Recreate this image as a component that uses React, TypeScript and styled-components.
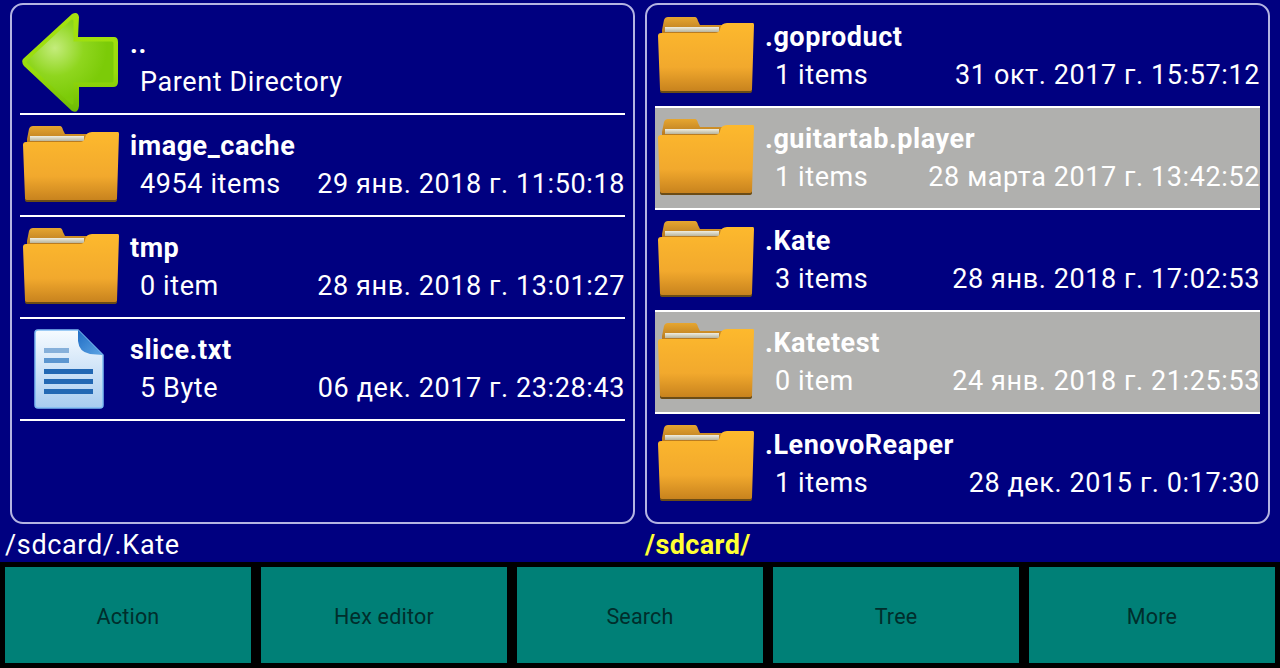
import React from 'react'
import styled, { createGlobalStyle } from 'styled-components'

const GlobalStyle = createGlobalStyle`
  html, body {
    margin: 0;
    padding: 0;
    background: #000080;
  }
  body {
    font-family: Roboto, "Liberation Sans", sans-serif;
  }
`;

const Screen = styled.div`
  width: 1280px;
  height: 668px;
  display: flex;
  flex-direction: column;
  overflow: hidden;
  background: #000080;
`;

const Panes = styled.div`
  display: grid;
  grid-template-columns: 625px 625px;
  column-gap: 10px;
  padding: 3px 10px 0;
  height: 521px;
`;

const Pane = styled.div<{ $top: number }>`
  box-sizing: border-box;
  height: 521px;
  border: 2px solid #b4b4e2;
  border-radius: 13px;
  padding: ${(p) => p.$top}px 8px 0;
  overflow: hidden;
`;

const Row = styled.div<{ $selected?: boolean; $last?: boolean }>`
  box-sizing: border-box;
  height: 102px;
  display: flex;
  background: ${(p) => (p.$selected ? '#b0b0ae' : 'transparent')};
  border-bottom: 2px solid ${(p) => (p.$last ? 'transparent' : '#ffffff')};
`;

const IconSlot = styled.div`
  flex: none;
  width: 110px;
  display: flex;
  align-items: center;
  padding-left: 2px;
  box-sizing: border-box;
`;

const Info = styled.div`
  flex: 1;
  min-width: 0;
  color: #ffffff;
  padding-top: 15px;
`;

const Name = styled.div`
  font-size: 27px;
  line-height: 33px;
  font-weight: 700;
  letter-spacing: 0.55px;
  white-space: nowrap;
`;

const Details = styled.div`
  display: flex;
  justify-content: space-between;
  padding: 5px 0 0 10px;
  font-size: 27px;
  line-height: 33px;
  letter-spacing: 0.6px;
  white-space: nowrap;
`;

const Paths = styled.div`
  box-sizing: border-box;
  display: grid;
  grid-template-columns: 640px 1fr;
  height: 38px;
  align-items: center;
  padding: 4px 0 0 5px;
  font-size: 27px;
  letter-spacing: 0.65px;
  color: #ffffff;
`;

const ActivePath = styled.div`
  color: #ffff33;
  font-weight: 700;
  letter-spacing: 0.4px;
`;

const Toolbar = styled.div`
  flex: 1;
  background: #000000;
  display: grid;
  grid-template-columns: repeat(5, 246px);
  column-gap: 10px;
  padding: 5px;
`;

const ToolButton = styled.div`
  background: #008077;
  color: #002e2c;
  font-size: 21.5px;
  letter-spacing: 0.2px;
  padding-top: 2px;
  display: flex;
  align-items: center;
  justify-content: center;
`;

const FolderIcon = () => (
  <svg width="98" height="78" viewBox="0 1 98 78">
    <defs>
      <linearGradient id="folderBody" x1="0" y1="0" x2="0" y2="1">
        <stop offset="0" stopColor="#fdb92d" />
        <stop offset="0.65" stopColor="#f2a92d" />
        <stop offset="1" stopColor="#c8831e" />
      </linearGradient>
      <linearGradient id="folderTab" x1="0" y1="0" x2="0" y2="1">
        <stop offset="0" stopColor="#e6a630" />
        <stop offset="1" stopColor="#b87a20" />
      </linearGradient>
      <linearGradient id="folderPaper" x1="0" y1="0" x2="0" y2="1">
        <stop offset="0" stopColor="#f0eee0" />
        <stop offset="1" stopColor="#b8b49c" />
      </linearGradient>
    </defs>
    <path d="M5 14 L7 4 Q8 1 11 1 L38 1 Q40 1 41 5 L43 9 L66 9 L66 17 L5 17 Z" fill="url(#folderTab)" />
    <rect x="8" y="11" width="54" height="5" fill="url(#folderPaper)" />
    <path d="M3 73 L3 75 Q3 77 6 77 L92 77 Q95 77 95 75 L95 73 Z" fill="#6b4c16" />
    <path
      d="M1 20 Q1 17 4 17 L58 17 Q62 17 63 13 Q64 7 70 7 L96 7 Q97 7 97 9 L95 73 Q95 75 92 75 L6 75 Q3 75 3 73 Z"
      fill="url(#folderBody)"
    />
  </svg>
);

const ArrowIcon = () => (
  <svg width="98" height="102" viewBox="0 0 98 102">
    <defs>
      <radialGradient id="arrowFill" cx="0.32" cy="0.33" r="0.62">
        <stop offset="0" stopColor="#c4ec7c" />
        <stop offset="0.55" stopColor="#8fd61e" />
        <stop offset="1" stopColor="#7ccb08" />
      </radialGradient>
      <linearGradient id="arrowRim" x1="0" y1="0" x2="0" y2="1">
        <stop offset="0" stopColor="#a6e30f" />
        <stop offset="0.6" stopColor="#98dc0c" />
        <stop offset="1" stopColor="#6cba04" />
      </linearGradient>
    </defs>
    <path
      d="M1 47 L50 2 Q56 -1 57 5 L56 25 L92 25 Q96 25 96 30 L96 70 Q96 75 91 75 L57 75 L57 94 Q56 102 50 99 L2 54 Q-1 50 1 47 Z"
      fill="url(#arrowRim)"
    />
    <path
      d="M6 50 L50 9 L50 31 L90 31 L90 69 L50 69 L50 91 Z"
      fill="url(#arrowFill)"
      stroke="url(#arrowFill)"
      strokeWidth="3"
      strokeLinejoin="round"
    />
  </svg>
);

const FileIcon = () => (
  <svg width="98" height="82" viewBox="0 1 98 82">
    <defs>
      <linearGradient id="filePage" x1="0" y1="0" x2="0" y2="1">
        <stop offset="0" stopColor="#f6fbff" />
        <stop offset="1" stopColor="#a8ccf0" />
      </linearGradient>
      <linearGradient id="fileFold" x1="0" y1="0" x2="1" y2="1">
        <stop offset="0" stopColor="#1f6cc4" />
        <stop offset="1" stopColor="#5ea5e4" />
      </linearGradient>
    </defs>
    <path
      d="M13 6 Q13 3 16 3 L56 3 L81 28 L81 78 Q81 81 78 81 L16 81 Q13 81 13 78 Z"
      fill="url(#filePage)"
      stroke="#7fbcf2"
      strokeWidth="1.5"
    />
    <path d="M56 3 L81 28 L68 27 Q57 25 56 14 Z" fill="url(#fileFold)" />
    <rect x="22" y="21" width="25" height="5" fill="#86b0da" />
    <rect x="22" y="31" width="25" height="5" fill="#5c96d0" />
    <rect x="22" y="42" width="49" height="5" fill="#2268b4" />
    <rect x="22" y="52" width="49" height="5" fill="#2268b4" />
    <rect x="22" y="62" width="49" height="5" fill="#2268b4" />
  </svg>
);

type Entry = {
  name: string;
  size: string;
  date?: string;
  icon: 'folder' | 'file' | 'up';
  selected?: boolean;
};

const leftEntries: Entry[] = [
  { name: '..', size: 'Parent Directory', icon: 'up' },
  { name: 'image_cache', size: '4954 items', date: '29 янв. 2018 г. 11:50:18', icon: 'folder' },
  { name: 'tmp', size: '0 item', date: '28 янв. 2018 г. 13:01:27', icon: 'folder' },
  { name: 'slice.txt', size: '5 Byte', date: '06 дек. 2017 г. 23:28:43', icon: 'file' },
];

const rightEntries: Entry[] = [
  { name: '.goproduct', size: '1 items', date: '31 окт. 2017 г. 15:57:12', icon: 'folder' },
  { name: '.guitartab.player', size: '1 items', date: '28 марта 2017 г. 13:42:52', icon: 'folder', selected: true },
  { name: '.Kate', size: '3 items', date: '28 янв. 2018 г. 17:02:53', icon: 'folder' },
  { name: '.Katetest', size: '0 item', date: '24 янв. 2018 г. 21:25:53', icon: 'folder', selected: true },
  { name: '.LenovoReaper', size: '1 items', date: '28 дек. 2015 г. 0:17:30', icon: 'folder' },
];

const buttons = ['Action', 'Hex editor', 'Search', 'Tree', 'More'];

const EntryRow = ({ entry, last }: { entry: Entry; last?: boolean }) => (
  <Row $selected={entry.selected} $last={last}>
    <IconSlot>
      {entry.icon === 'folder' && <FolderIcon />}
      {entry.icon === 'up' && <ArrowIcon />}
      {entry.icon === 'file' && <FileIcon />}
    </IconSlot>
    <Info>
      <Name>{entry.name}</Name>
      <Details>
        <span>{entry.size}</span>
        {entry.date && <span>{entry.date}</span>}
      </Details>
    </Info>
  </Row>
);

export default function App() {
  return (
    <Screen>
      <GlobalStyle />
      <Panes>
        <Pane $top={8}>
          {leftEntries.map((e) => (
            <EntryRow key={e.name} entry={e} />
          ))}
        </Pane>
        <Pane $top={1}>
          {rightEntries.map((e, i) => (
            <EntryRow key={e.name} entry={e} last={i === rightEntries.length - 1} />
          ))}
        </Pane>
      </Panes>
      <Paths>
        <div>/sdcard/.Kate</div>
        <ActivePath>/sdcard/</ActivePath>
      </Paths>
      <Toolbar>
        {buttons.map((b) => (
          <ToolButton key={b}>{b}</ToolButton>
        ))}
      </Toolbar>
    </Screen>
  );
}
